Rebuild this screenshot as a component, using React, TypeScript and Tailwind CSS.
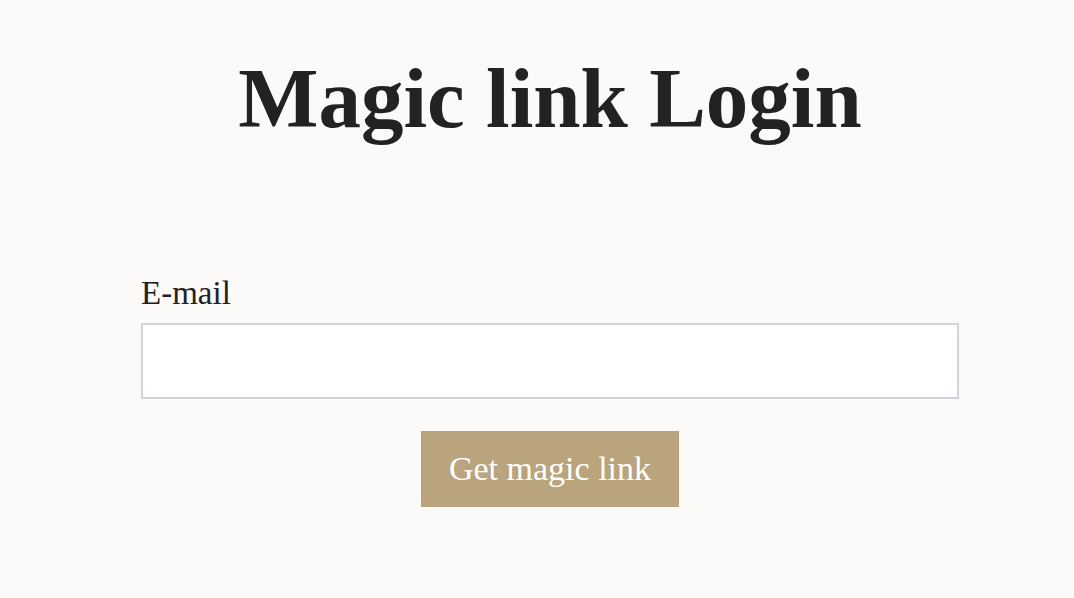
export default function App() {
  return (
    <div className="min-h-[598px] w-full bg-[#fbfaf8] pl-[141px] pt-[56px]" style={{ fontFamily: '"Liberation Serif", serif' }}>
      <div className="flex w-[818px] flex-col">
        <h1 className="text-center text-[85px] font-bold leading-none text-[#222222]">Magic link Login</h1>
        <label className="mt-[136px] text-[33px] leading-none text-[#222222]">E-mail</label>
        <input type="email" className="mt-[13px] h-[76px] w-[818px] border-2 border-[#d1d5db] bg-white outline-none" />
        <div className="mt-[32px] flex justify-center">
          <button className="h-[76px] w-[258px] bg-[#b9a47e] text-[34px] leading-none text-white">Get magic link</button>
        </div>
      </div>
    </div>
  );
}
